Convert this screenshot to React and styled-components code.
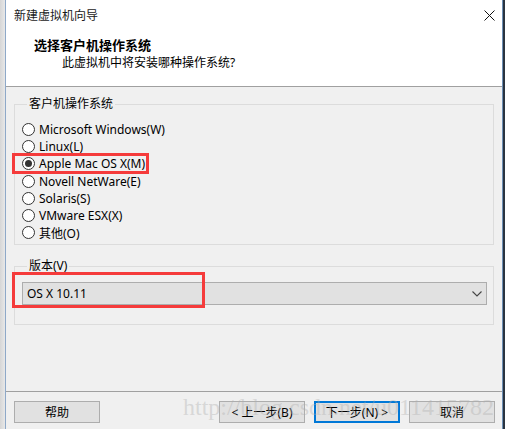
import React from 'react'
import styled, { createGlobalStyle } from 'styled-components'

const GlobalStyle = createGlobalStyle`
  html, body {
    margin: 0;
    padding: 0;
    background: #2a3440;
  }
  * { box-sizing: border-box; }
`

const Page = styled.div`
  display: flex;
  width: 505px;
  height: 429px;
  font-family: "Noto Sans", "Noto Sans CJK SC", sans-serif;
  font-size: 12px;
  color: #000;
`

const Shadow = styled.div`
  width: 5px;
  background: linear-gradient(to right, #d6d6d6, #e8e8e8);
`

const Window = styled.div`
  position: relative;
  width: 498px;
  display: flex;
  flex-direction: column;
  background: #f0f0f0;
  border-left: 1px solid #8fa9c8;
  border-right: 1px solid #6d8fb5;
`

const Header = styled.div`
  background: #fff;
  height: 87px;
  border-bottom: 1px solid #a0a0a0;
`

const TitleBar = styled.div`
  height: 30px;
  display: flex;
  align-items: center;
  justify-content: space-between;
  padding: 0 1px 0 8px;
  color: #1a1a1a;
`

const CloseButton = styled.div`
  width: 24px;
  height: 30px;
  display: flex;
  align-items: center;
  justify-content: center;
`

const Heading = styled.div`
  margin: 6px 0 0 28px;
  font-size: 13px;
  font-weight: 700;
  line-height: 18px;
`

const Subtitle = styled.div`
  margin: 0 0 0 56px;
  line-height: 18px;
`

const Body = styled.div`
  flex: 1;
  padding: 9px 8px 0 8px;
`

const Group = styled.fieldset`
  margin: 0 0 ${p => p.$gap || 0}px 0;
  border: 1px solid #dcdcdc;
  padding: ${p => p.$pad};
  min-width: 0;
`

const Legend = styled.legend`
  padding: 0 2px;
  margin-left: 5px;
  line-height: 16px;
`

const RadioRow = styled.label`
  position: relative;
  display: flex;
  align-items: center;
  height: 17.2px;
  gap: 4px;
`

const RadioCircle = styled.span`
  width: 13px;
  height: 13px;
  border-radius: 50%;
  border: 1px solid #333;
  background: #fff;
  display: flex;
  align-items: center;
  justify-content: center;
  &::after {
    content: '';
    width: 7px;
    height: 7px;
    border-radius: 50%;
    background: ${p => (p.$checked ? '#333' : 'transparent')};
  }
`

const Mark = styled.div`
  position: absolute;
  border: 3px solid #f53b3b;
  pointer-events: none;
`

const SelectWrap = styled.div`
  position: relative;
`

const Select = styled.div`
  height: 23px;
  border: 1px solid #adadad;
  background: #e1e1e1;
  display: flex;
  align-items: center;
  justify-content: space-between;
  padding: 0 4px 0 4px;
`

const Footer = styled.div`
  position: relative;
  border-top: 1px solid #a0a0a0;
  height: 38px;
  display: flex;
  align-items: flex-start;
  padding: 9px 0 0 8px;
`

const Button = styled.div`
  width: 86px;
  height: 22px;
  display: flex;
  align-items: center;
  justify-content: center;
  background: #e1e1e1;
  border: ${p => (p.$default ? '2px solid #0078d7' : '1px solid #adadad')};
  margin-left: ${p => p.$ml || 0}px;
`

const Watermark = styled.div`
  position: absolute;
  left: 177px;
  top: 2px;
  font-family: "Liberation Serif", serif;
  font-size: 24px;
  color: rgba(175, 175, 175, 0.4);
  pointer-events: none;
  white-space: nowrap;
`

const systems = [
  'Microsoft Windows(W)',
  'Linux(L)',
  'Apple Mac OS X(M)',
  'Novell NetWare(E)',
  'Solaris(S)',
  'VMware ESX(X)',
  '其他(O)',
]

export default function App() {
  return (
    <Page>
      <GlobalStyle />
      <Shadow />
      <Window>
        <Header>
          <TitleBar>
            <span>新建虚拟机向导</span>
            <CloseButton>
              <svg width="11" height="11" viewBox="0 0 11 11">
                <path d="M0.5 0.5 L10.5 10.5 M10.5 0.5 L0.5 10.5" stroke="#111" strokeWidth="1" />
              </svg>
            </CloseButton>
          </TitleBar>
          <Heading>选择客户机操作系统</Heading>
          <Subtitle>此虚拟机中将安装哪种操作系统?</Subtitle>
        </Header>
        <Body>
          <Group $pad="9px 8px 3px 7px" $gap={13}>
            <Legend>客户机操作系统</Legend>
            {systems.map(s => (
              <RadioRow key={s}>
                <RadioCircle $checked={s.startsWith('Apple')} />
                <span>{s}</span>
                {s.startsWith('Apple') && (
                  <Mark style={{ left: -10, top: -2, width: 137, height: 21 }} />
                )}
              </RadioRow>
            ))}
          </Group>
          <Group $pad="8px 6px 19px 7px">
            <Legend>版本(V)</Legend>
            <SelectWrap>
              <Select>
                <span>OS X 10.11</span>
                <svg width="10" height="6" viewBox="0 0 10 6">
                  <path d="M0.5 0.5 L5 5 L9.5 0.5" stroke="#444" strokeWidth="1.1" fill="none" />
                </svg>
              </Select>
              <Mark style={{ left: -10, top: -10, width: 193, height: 36 }} />
            </SelectWrap>
          </Group>
        </Body>
        <Footer>
          <Button>帮助</Button>
          <Button $ml={119}>&lt; 上一步(B)</Button>
          <Button $ml={9} $default>下一步(N) &gt;</Button>
          <Button $ml={9}>取消</Button>
          <Watermark>http://blog.csdn.net/u011415782</Watermark>
        </Footer>
      </Window>
    </Page>
  )
}
